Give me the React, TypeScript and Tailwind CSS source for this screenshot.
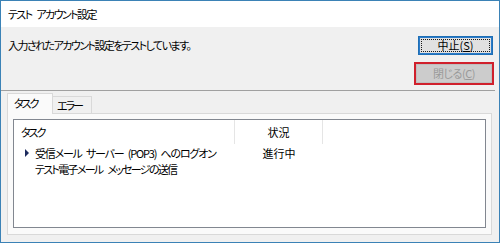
import React from "react"

const FONT = "font-['Noto_Sans_CJK_JP','Noto_Sans',sans-serif] [font-feature-settings:'palt']"

function ListView() {
  return (
    <div className="flex-1 border border-[#828790] bg-white flex flex-col">
      {/* header */}
      <div className="flex h-[25px] items-start">
        <div className="w-[221px] h-[24px] pl-[7px] flex items-center border-r border-[#e5e5e5] tracking-[-2px]">
          タスク
        </div>
        <div className="w-[88px] h-[24px] flex items-center justify-center border-r border-[#e5e5e5]">状況</div>
      </div>
      {/* rows */}
      <div className="flex h-[16px] items-center whitespace-nowrap">
        <div className="w-[221px] flex items-center pl-[11px]">
          <svg width="4" height="8" viewBox="0 0 4 8" className="mr-[6px] shrink-0">
            <path d="M0 0 L4 4 L0 8 Z" fill="#1d2b5e" />
          </svg>
          <span className="tracking-[-1.2px] [word-spacing:3px]">受信メール サーバー (POP3) へのログオン</span>
        </div>
        <div className="w-[88px] flex justify-center">進行中</div>
      </div>
      <div className="flex h-[16px] items-center whitespace-nowrap">
        <div className="w-[221px] pl-[21px] tracking-[-1.7px] [word-spacing:4px]">テスト電子メール メッセージの送信</div>
      </div>
    </div>
  )
}

export default function App() {
  return (
    <div
      className={`w-[500px] h-[243px] border border-[#3b82b6] bg-[#f0f0f0] flex flex-col text-[11px] leading-[11px] text-black whitespace-nowrap ${FONT}`}
    >
      {/* title bar */}
      <div className="h-[26px] shrink-0 bg-white flex items-center pl-[7px] tracking-[-1.6px] [word-spacing:4px]">
        テスト アカウント設定
      </div>

      {/* message + buttons */}
      <div className="flex justify-between shrink-0">
        <div className="pl-[7px] pt-[13px] tracking-[-1.55px]">入力されたアカウント設定をテストしています。</div>
        <div className="flex flex-col items-end pr-[5px] pt-[9px]">
          <button className="relative w-[75px] h-[19px] mr-[1px] bg-[#e1e1e1] border border-[#1f6fb5] flex items-center justify-center">
            <span className="absolute inset-0 border border-[#2b7bc9]" />
            <span className="absolute inset-[2px] border border-dotted border-[#1a1a1a]" />
            <span className="relative">
              中止(<span className="underline">S</span>)
            </span>
          </button>
          <div className="mt-[7px] w-[80px] h-[23px] border-2 border-[#d0202c] flex">
            <div className="flex-1 bg-[#cccccc] border border-[#bfbfbf] flex items-center justify-center text-[#9a9a9a] tracking-[-0.5px]">
              <span>
                閉じる(<span className="underline">C</span>)
              </span>
            </div>
          </div>
        </div>
      </div>

      {/* separator */}
      <div className="mt-[5px] mr-[4px] h-px shrink-0 bg-[#a0a0a0]" />

      {/* tabs */}
      <div className="mt-[2px] ml-[6px] flex items-end h-[20px] shrink-0">
        <div className="w-[46px] h-[21px] relative z-10 -mb-px bg-[#fafafa] border border-b-0 border-[#d9d9d9] flex items-center pl-[6px] pb-[2px] tracking-[-2px]">
          タスク
        </div>
        <div className="w-[39px] h-[17px] bg-[#f0f0f0] border border-l-0 border-b-0 border-[#d9d9d9] flex items-center pl-[4px] tracking-[-2px]">
          エラー
        </div>
      </div>

      {/* tab page */}
      <div className="ml-[6px] mr-[7px] h-[122px] shrink-0 border border-[#d9d9d9] bg-[#fafafa] flex flex-col px-[5px] pt-[5px] pb-[6px]">
        <ListView />
      </div>
    </div>
  )
}
